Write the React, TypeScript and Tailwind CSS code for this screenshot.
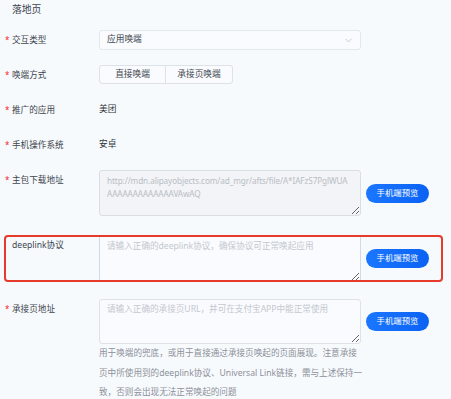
import React from 'react';

const font = "font-['Noto_Sans','Noto_Sans_CJK_SC',sans-serif]";

function Label({ text, required = true }: { text: string; required?: boolean }) {
  return (
    <div className="w-[99px] h-[20px] flex items-center pl-[5px] shrink-0 text-[8.6px] text-[#40454d]">
      <span className="w-[7px] text-[#f5222d] text-[8px] leading-none">{required ? '*' : ''}</span>
      <span>{text}</span>
    </div>
  );
}

function PreviewButton() {
  return (
    <button className="ml-[5px] self-center w-[63px] h-[19px] rounded-full bg-gradient-to-r from-[#1b76ff] to-[#0962f3] text-white text-[8.4px] leading-none">
      手机端预览
    </button>
  );
}

export default function App() {
  return (
    <div className={`min-h-screen w-[451px] bg-[#f7fafd] ${font} text-[#333]`}>
      <div className="h-[20px] leading-[20px] pl-[12px] text-[9.8px] text-[#40454d]">落地页</div>

      {/* 交互类型 */}
      <div className="flex items-start mt-[10px]">
        <Label text="交互类型" />
        <div className="w-[262px] h-[20px] border border-[#e3e7ee] rounded-[3px] bg-[#f9fbfe] flex items-center justify-between pl-[7px] pr-[8px] text-[8.7px] text-[#40454d]">
          <span>应用唤端</span>
          <svg width="7" height="5" viewBox="0 0 7 5" fill="none">
            <path d="M0.5 0.8 L3.5 4 L6.5 0.8" stroke="#c3c8d0" strokeWidth="0.9" />
          </svg>
        </div>
      </div>

      {/* 唤端方式 */}
      <div className="flex items-start mt-[15px]">
        <Label text="唤端方式" />
        <div className="flex h-[19px] border border-[#dde1e8] rounded-[3px] bg-[#f9fbfe] text-[8.7px] text-[#40454d]">
          <div className="w-[65px] flex items-center justify-center">直接唤端</div>
          <div className="w-[67px] flex items-center justify-center border-l border-[#dde1e8]">承接页唤端</div>
        </div>
      </div>

      {/* 推广的应用 */}
      <div className="flex items-start mt-[15px]">
        <Label text="推广的应用" />
        <div className="h-[20px] flex items-center text-[8.7px] text-[#2f343b]">美团</div>
      </div>

      {/* 手机操作系统 */}
      <div className="flex items-start mt-[15px]">
        <Label text="手机操作系统" />
        <div className="h-[20px] flex items-center text-[8.7px] text-[#2f343b]">安卓</div>
      </div>

      {/* 主包下载地址 */}
      <div className="flex items-start mt-[15px]">
        <Label text="主包下载地址" />
        <textarea
          readOnly
          value={'http://mdn.alipayobjects.com/ad_mgr/afts/file/A*IAFzS7PglWUA\nAAAAAAAAAAAAAVAwAQ'}
          className="w-[262px] h-[46px] border border-[#d9dde4] rounded-[3px] bg-[#f2f4f7] px-[7px] pt-[3px] text-[8.2px] tracking-[-0.1px] leading-[13px] text-[#b9bdc5] outline-none whitespace-pre overflow-hidden"
        />
        <PreviewButton />
      </div>

      {/* deeplink协议 */}
      <div className="relative flex items-start mt-[19px]">
        <Label text="deeplink协议" required={false} />
        <textarea
          placeholder="请输入正确的deeplink协议，确保协议可正常唤起应用"
          className="w-[262px] h-[47px] border border-[#d3d9e4] rounded-[3px] bg-[#f9fbfe] px-[7px] pt-[4px] text-[8.6px] leading-[13px] outline-none placeholder:text-[#c4c8cf]"
        />
        <PreviewButton />
        <div className="pointer-events-none absolute left-[4px] top-0 w-[439px] h-[47px] border-2 border-[#e63b2a] rounded-[4px]" />
      </div>

      {/* 承接页地址 */}
      <div className="flex items-start mt-[17px]">
        <Label text="承接页地址" />
        <textarea
          placeholder="请输入正确的承接页URL，并可在支付宝APP中能正常使用"
          className="w-[262px] h-[45px] border border-[#dde1e8] rounded-[3px] bg-[#f9fbfe] px-[7px] pt-[3px] text-[8.6px] leading-[13px] outline-none placeholder:text-[#c4c8cf]"
        />
        <PreviewButton />
      </div>

      <div className="pl-[99px] text-[8.6px] leading-[19.5px] text-[#8c9099] whitespace-nowrap">
        <div>用于唤端的兜底，或用于直接通过承接页唤起的页面展现。注意承接</div>
        <div>页中所使用到的deeplink协议、Universal Link链接，需与上述保持一</div>
        <div>致，否则会出现无法正常唤起的问题</div>
      </div>
    </div>
  );
}
